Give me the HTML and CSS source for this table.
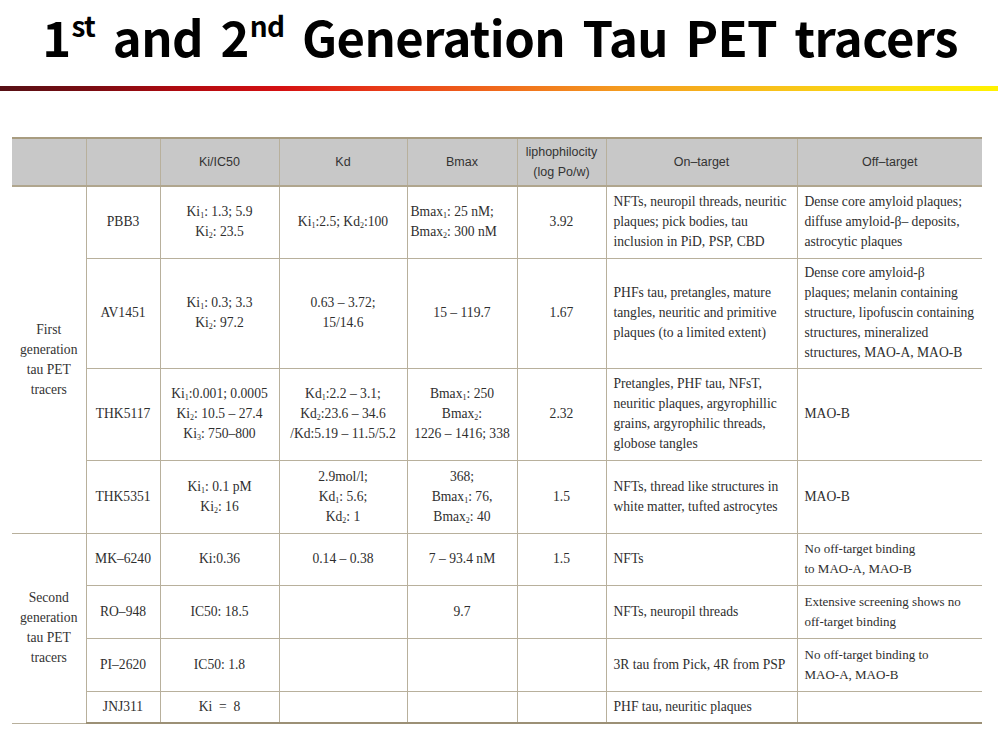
FILE: index.html
```html
<!DOCTYPE html>
<html>
<head>
<meta charset="utf-8">
<link rel="stylesheet" href="styles.css">
</head>
<body>
<header class="title-wrap">
  <h1 class="title">1<sup>st</sup> and 2<sup>nd</sup> Generation Tau PET tracers</h1>
</header>
<div class="rule"></div>
<main class="table-wrap">
<table class="tracers">
  <colgroup>
    <col class="c1"><col class="c2"><col class="c3"><col class="c4"><col class="c5"><col class="c6"><col class="c7"><col class="c8">
  </colgroup>
  <thead>
    <tr class="rh">
      <th class="first"></th>
      <th></th>
      <th>Ki/IC50</th>
      <th>Kd</th>
      <th>Bmax</th>
      <th>liphophilocity<br>(log Po/w)</th>
      <th>On–target</th>
      <th class="last">Off–target</th>
    </tr>
  </thead>
  <tbody>
    <tr class="r1">
      <td class="first grp" rowspan="4">First<br>generation<br>tau PET<br>tracers</td>
      <td>PBB3</td>
      <td>Ki<sub>1</sub>: 1.3; 5.9<br>Ki<sub>2</sub>: 23.5</td>
      <td>Ki<sub>1</sub>:2.5; Kd<sub>2</sub>:100</td>
      <td class="lft">Bmax<sub>1</sub>: 25 nM;<br>Bmax<sub>2</sub>: 300 nM</td>
      <td>3.92</td>
      <td class="txt">NFTs, neuropil threads, neuritic<br>plaques; pick bodies, tau<br>inclusion in PiD, PSP, CBD</td>
      <td class="txt last">Dense core amyloid plaques;<br>diffuse amyloid-β– deposits,<br>astrocytic plaques</td>
    </tr>
    <tr class="r2">
      <td>AV1451</td>
      <td>Ki<sub>1</sub>: 0.3; 3.3<br>Ki<sub>2</sub>: 97.2</td>
      <td>0.63 – 3.72;<br>15/14.6</td>
      <td>15 – 119.7</td>
      <td>1.67</td>
      <td class="txt">PHFs tau, pretangles, mature<br>tangles, neuritic and primitive<br>plaques (to a limited extent)</td>
      <td class="txt last">Dense core amyloid-β<br>plaques; melanin containing<br>structure, lipofuscin containing<br>structures, mineralized<br>structures, MAO-A, MAO-B</td>
    </tr>
    <tr class="r3">
      <td>THK5117</td>
      <td>Ki<sub>1</sub>:0.001; 0.0005<br>Ki<sub>2</sub>: 10.5 – 27.4<br>Ki<sub>3</sub>: 750–800</td>
      <td>Kd<sub>1</sub>:2.2 – 3.1;<br>Kd<sub>2</sub>:23.6 – 34.6<br>/Kd:5.19 – 11.5/5.2</td>
      <td>Bmax<sub>1</sub>: 250<br>Bmax<sub>2</sub>:<br>1226 – 1416; 338</td>
      <td>2.32</td>
      <td class="txt">Pretangles, PHF tau, NFsT,<br>neuritic plaques, argyrophillic<br>grains, argyrophilic threads,<br>globose tangles</td>
      <td class="txt last">MAO-B</td>
    </tr>
    <tr class="r4 grp-end">
      <td>THK5351</td>
      <td>Ki<sub>1</sub>: 0.1 pM<br>Ki<sub>2</sub>: 16</td>
      <td>2.9mol/l;<br>Kd<sub>1</sub>: 5.6;<br>Kd<sub>2</sub>: 1</td>
      <td>368;<br>Bmax<sub>1</sub>: 76,<br>Bmax<sub>2</sub>: 40</td>
      <td>1.5</td>
      <td class="txt">NFTs, thread like structures in<br>white matter, tufted astrocytes</td>
      <td class="txt last">MAO-B</td>
    </tr>
    <tr class="r5">
      <td class="first grp" rowspan="4">Second<br>generation<br>tau PET<br>tracers</td>
      <td>MK–6240</td>
      <td>Ki:0.36</td>
      <td>0.14 – 0.38</td>
      <td>7 – 93.4 nM</td>
      <td>1.5</td>
      <td class="txt">NFTs</td>
      <td class="txt last sm">No off-target binding<br>to MAO-A, MAO-B</td>
    </tr>
    <tr class="r6">
      <td>RO–948</td>
      <td>IC50: 18.5</td>
      <td></td>
      <td>9.7</td>
      <td></td>
      <td class="txt">NFTs, neuropil threads</td>
      <td class="txt last sm">Extensive screening shows no<br>off-target binding</td>
    </tr>
    <tr class="r7">
      <td>PI–2620</td>
      <td>IC50: 1.8</td>
      <td></td>
      <td></td>
      <td></td>
      <td class="txt">3R tau from Pick, 4R from PSP</td>
      <td class="txt last sm">No off-target binding to<br>MAO-A, MAO-B</td>
    </tr>
    <tr class="r8 end">
      <td>JNJ311</td>
      <td>Ki &nbsp;= &nbsp;8</td>
      <td></td>
      <td></td>
      <td></td>
      <td class="txt">PHF tau, neuritic plaques</td>
      <td class="txt last"></td>
    </tr>
  </tbody>
</table>
</main>
</body>
</html>
```

FILE: styles.css
```css
html, body {
  margin: 0;
  padding: 0;
  background: #ffffff;
}

.title-wrap {
  height: 86px;
  display: flex;
  justify-content: center;
  align-items: flex-start;
}

.title {
  margin: 4px 0 0 0;
  font-family: "Noto Sans CJK KR", "Noto Sans", sans-serif;
  font-weight: 700;
  font-size: 49px;
  line-height: 64px;
  color: #000;
  letter-spacing: -0.6px;
  word-spacing: 7px;
  white-space: nowrap;
}

.title sup {
  font-size: 28px;
  line-height: 0;
  vertical-align: 20px;
  margin-left: 1px;
}

.rule {
  height: 5px;
  margin-right: 2px;
  background: linear-gradient(to right,
    #561015 0%,
    #7a0c12 9%,
    #b00a10 18%,
    #d41012 28%,
    #e83a18 38%,
    #f06a1c 50%,
    #f49a20 62%,
    #f8c21a 78%,
    #fce010 90%,
    #fff200 100%);
}

.table-wrap {
  padding: 46px 0 0 12px;
}

.tracers {
  border-collapse: collapse;
  table-layout: fixed;
  width: 970px;
  font-family: "Liberation Serif", "DejaVu Serif", serif;
  font-size: 13.6px;
  line-height: 20px;
  color: #2e2e2e;
}

.c1 { width: 74px; }
.c2 { width: 74px; }
.c3 { width: 119px; }
.c4 { width: 128px; }
.c5 { width: 110px; }
.c6 { width: 89px; }
.c7 { width: 191px; }
.c8 { width: 185px; }

.tracers th,
.tracers td {
  border: 1px solid #b8b09c;
  padding: 0 2px;
  text-align: center;
  vertical-align: middle;
  white-space: nowrap;
  overflow: hidden;
}

.tracers th {
  background: #c8c8c8;
  border-top: 2px solid #a89c80;
  border-bottom: 2px solid #b0a68e;
  font-family: "Liberation Sans", "DejaVu Sans", sans-serif;
  font-weight: 400;
  font-size: 12.5px;
  color: #333;
}

.tracers .first { border-left: none; }
.tracers .last { border-right: none; }

.tracers td.txt {
  text-align: left;
  padding-left: 7px;
}

.tracers td.lft {
  text-align: left;
  padding-left: 3px;
}

.tracers td.sm {
  font-size: 13px;
}

.tracers td.grp {
  color: #333;
}

.tracers sub {
  font-size: 8px;
  line-height: 0;
  vertical-align: -2px;
}

.rh { height: 48px; }
.r1 { height: 72px; }
.r2 { height: 110px; }
.r3 { height: 92px; }
.r4 { height: 73px; }
.r5 { height: 52px; }
.r6 { height: 53px; }
.r7 { height: 53px; }
.r8 { height: 32px; }

.tracers tr.end td {
  border-bottom: 2px solid #9c9076;
}
```
